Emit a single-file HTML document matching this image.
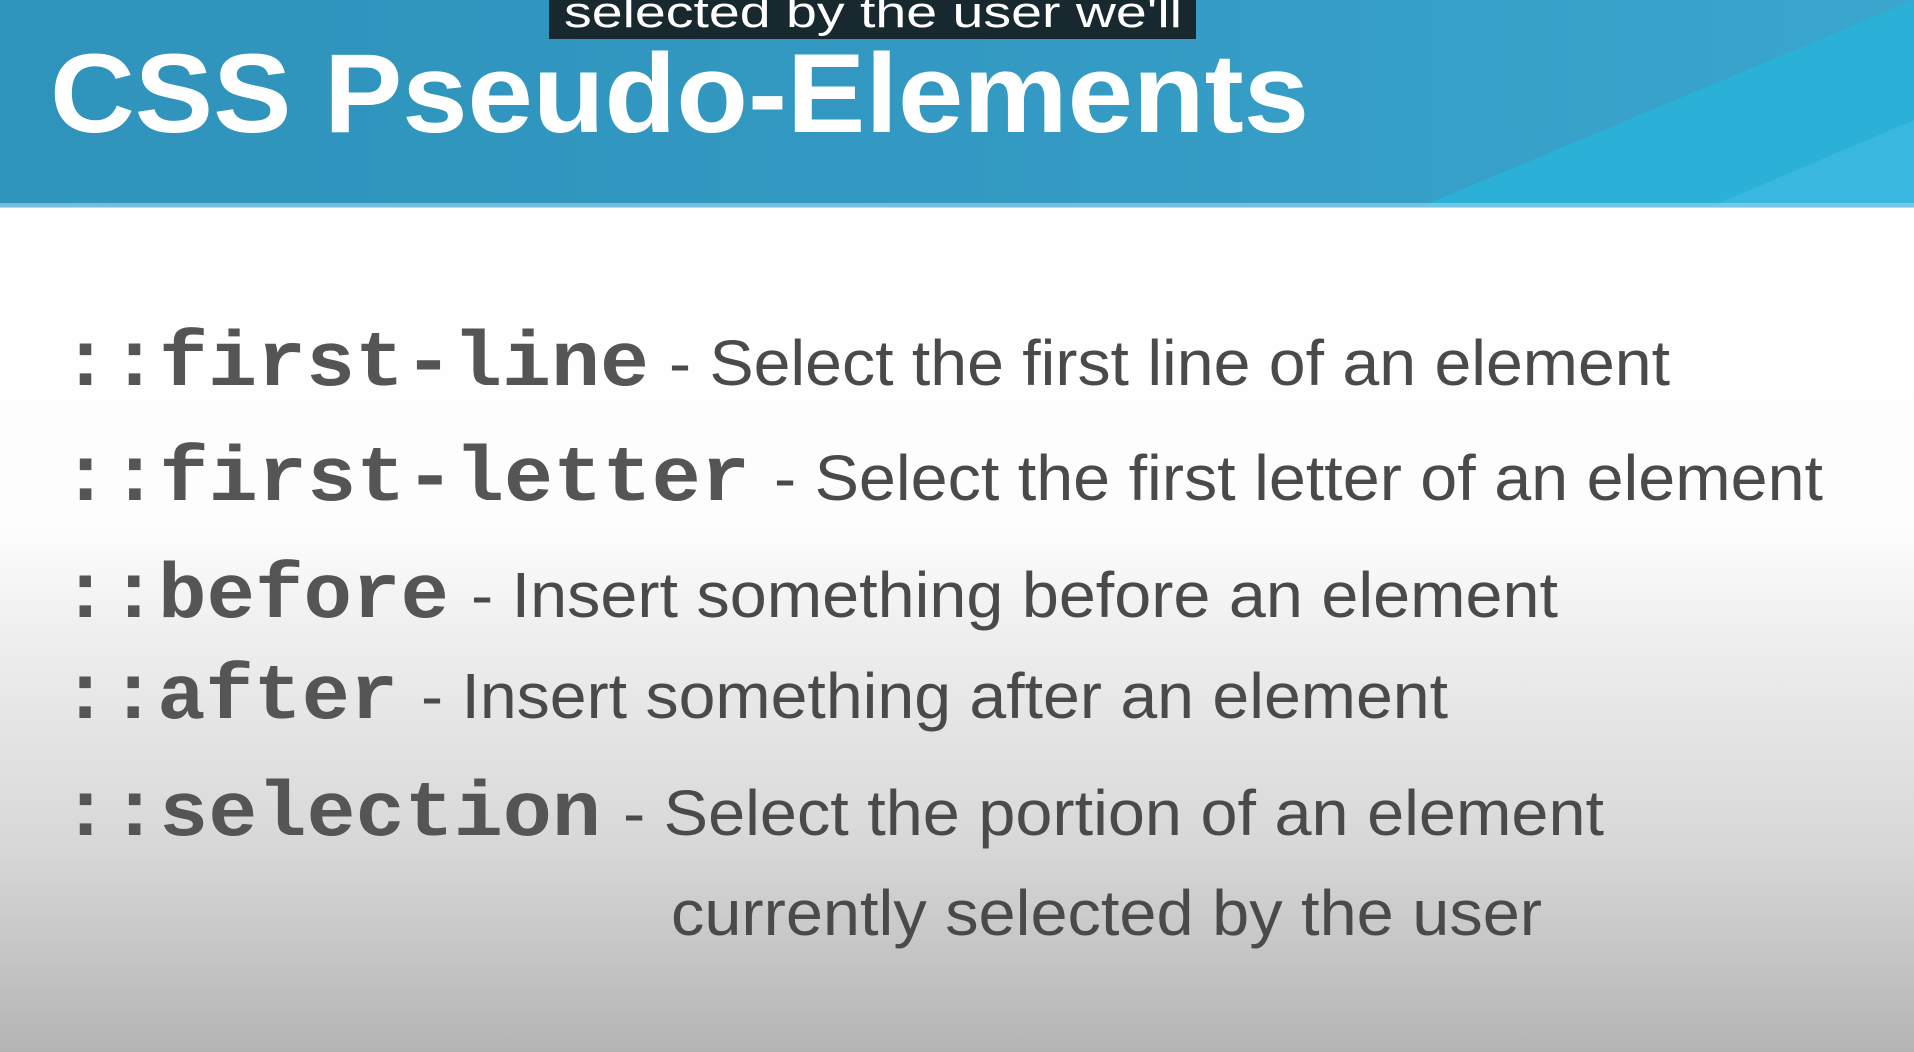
<!DOCTYPE html>
<html><head><meta charset="utf-8"><style>html,body{margin:0;padding:0;overflow:hidden}svg{display:block}</style></head>
<body>
<svg width="1914" height="1052" viewBox="0 0 1914 1052" xmlns="http://www.w3.org/2000/svg">
<defs>
<linearGradient id="bg" x1="0" y1="0" x2="0" y2="1052" gradientUnits="userSpaceOnUse">
<stop offset="0" stop-color="#ffffff"/>
<stop offset="0.5" stop-color="#fdfdfd"/>
<stop offset="0.6" stop-color="#efefef"/>
<stop offset="0.8" stop-color="#d8d8d8"/>
<stop offset="1" stop-color="#b4b4b4"/>
</linearGradient>
<linearGradient id="hd" x1="0" y1="0" x2="1" y2="0">
<stop offset="0" stop-color="#2f93bb"/>
<stop offset="0.5" stop-color="#3399c2"/>
<stop offset="1" stop-color="#3aa6cd"/>
</linearGradient>
</defs>
<rect width="1914" height="1052" fill="url(#bg)"/>
<rect width="1914" height="207" fill="url(#hd)"/>
<polygon points="1420,207 1914,0 1914,207" fill="#2bb0d8"/>
<polygon points="1710,207 1914,120 1914,207" fill="#3ab8df"/>
<rect y="203" width="1914" height="5" fill="#8fd0ea" opacity="0.7"/>
<text x="50" y="132" font-family="Liberation Sans, sans-serif" font-weight="bold" font-size="112" fill="#fff" textLength="1259" lengthAdjust="spacingAndGlyphs">CSS Pseudo-Elements</text>
<rect x="549" y="0" width="647" height="39" fill="#18282f"/>
<text x="564" y="27" font-family="Liberation Sans, sans-serif" font-size="44" fill="#fff" textLength="618" lengthAdjust="spacingAndGlyphs">selected by the user we'll</text>
<g font-family="Liberation Mono, monospace" font-weight="bold" font-size="78" fill="#555">
<text x="61" y="385" textLength="588" lengthAdjust="spacingAndGlyphs">::first-line</text>
<text x="61" y="500" textLength="689" lengthAdjust="spacingAndGlyphs">::first-letter</text>
<text x="61" y="617" textLength="388" lengthAdjust="spacingAndGlyphs">::before</text>
<text x="61" y="718" textLength="337" lengthAdjust="spacingAndGlyphs">::after</text>
<text x="61" y="835" textLength="540" lengthAdjust="spacingAndGlyphs">::selection</text>
</g>
<g font-family="Liberation Sans, sans-serif" font-size="64" fill="#4a4a4a">
<text x="669" y="385" textLength="1001" lengthAdjust="spacingAndGlyphs">- Select the first line of an element</text>
<text x="774" y="500" textLength="1049" lengthAdjust="spacingAndGlyphs">- Select the first letter of an element</text>
<text x="471" y="617" textLength="1087" lengthAdjust="spacingAndGlyphs">- Insert something before an element</text>
<text x="421" y="718" textLength="1027" lengthAdjust="spacingAndGlyphs">- Insert something after an element</text>
<text x="623" y="835" textLength="981" lengthAdjust="spacingAndGlyphs">- Select the portion of an element</text>
<text x="671" y="935" textLength="871" lengthAdjust="spacingAndGlyphs">currently selected by the user</text>
</g>
</svg>
</body></html>
